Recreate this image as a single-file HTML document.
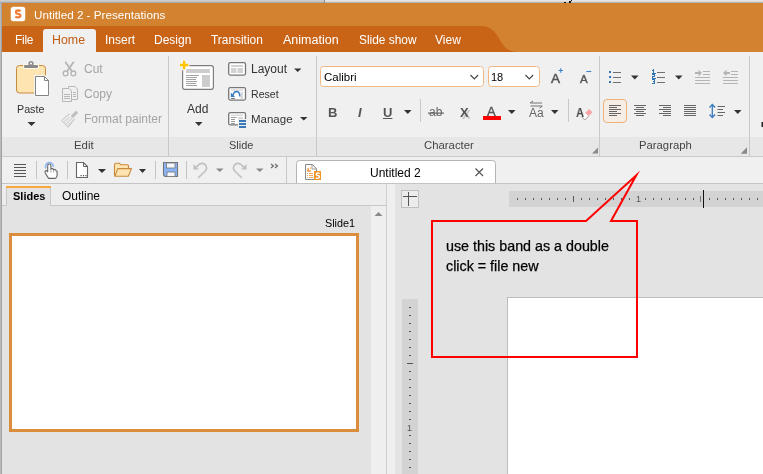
<!DOCTYPE html>
<html><head><meta charset="utf-8">
<style>
*{box-sizing:border-box;margin:0;padding:0}
html,body{width:763px;height:474px;overflow:hidden;background:#e3e3e3;font-family:"Liberation Sans",sans-serif;font-size:12px;color:#222}
.a{position:absolute}
.t{position:absolute;white-space:pre;line-height:1;will-change:transform}
svg{position:absolute;left:0;top:0}
</style></head><body>
<svg width="763" height="474" viewBox="0 0 763 474" shape-rendering="crispEdges">
<!-- window chrome -->
<rect x="0" y="0" width="324" height="1" fill="#cdcdcd"/><rect x="0" y="1" width="324" height="1" fill="#c4c4c4"/><rect x="0" y="2" width="324" height="1" fill="#a9a9a9"/>
<rect x="325" y="0" width="438" height="1" fill="#e4e4e4"/><rect x="325" y="1" width="438" height="1" fill="#dcdcdc"/><rect x="325" y="2" width="438" height="1" fill="#b4b4b4"/>
<rect x="324" y="0" width="1" height="3" fill="#8f8f8f"/>
<rect x="564" y="2" width="2" height="1" fill="#111"/><rect x="569" y="1" width="2" height="2" fill="#111"/><rect x="571" y="0" width="1" height="1" fill="#111"/>
<rect x="2" y="3" width="761" height="49" fill="#d3822f"/>
<path d="M2 26 H481 C490 26 495 31 500 40 C504 47 508 52 518 52 H2 Z" fill="#c96417" shape-rendering="auto"/>
<rect x="0" y="3" width="1" height="471" fill="#bababa"/><rect x="1" y="3" width="1" height="471" fill="#a2a2a2"/>
<!-- ribbon -->
<rect x="2" y="52" width="761" height="85" fill="#f0f0f0"/>
<rect x="2" y="137" width="761" height="19" fill="#e7e7e7"/>
<rect x="2" y="156" width="761" height="1" fill="#c9c9c9"/>
<rect x="43" y="29" width="53" height="23" rx="3" fill="#f0f0f0" shape-rendering="auto"/>
<rect x="43" y="40" width="53" height="12" fill="#f0f0f0"/>
<rect x="168" y="56" width="1" height="100" fill="#c8c8c8"/>
<rect x="316" y="56" width="1" height="100" fill="#c8c8c8"/>
<rect x="599" y="56" width="1" height="100" fill="#c8c8c8"/>
<rect x="749" y="56" width="1" height="100" fill="#c8c8c8"/>
<!-- toolbar row -->
<rect x="2" y="157" width="761" height="26" fill="#f0f0f0"/>
<rect x="2" y="183" width="761" height="1" fill="#c4c4c4"/>
<rect x="286" y="157" width="1" height="26" fill="#c8c8c8"/>
<!-- doc tab -->
<path d="M296.5 183 V163.5 A3 3 0 0 1 299.5 160.5 H492.5 A3 3 0 0 1 495.5 163.5 V183" fill="#fff" stroke="#b4b4b4" shape-rendering="auto"/>
<!-- left panel -->
<rect x="2" y="184" width="385" height="21" fill="#ededed"/>
<rect x="2" y="205" width="385" height="1" fill="#c8c8c8"/>
<rect x="2" y="206" width="369" height="268" fill="#e3e3e3"/>
<rect x="371" y="206" width="15" height="268" fill="#efefef"/>
<rect x="386" y="184" width="1" height="290" fill="#cfcfcf"/>
<rect x="387" y="184" width="8" height="290" fill="#efefef"/>
<!-- slides tab -->
<rect x="6" y="186" width="45" height="20" fill="#e3e3e3"/>
<rect x="6" y="186" width="1" height="20" fill="#c8c8c8"/>
<rect x="50" y="186" width="1" height="20" fill="#c8c8c8"/>
<rect x="6" y="186" width="45" height="2" fill="#f9a83c"/>
<!-- thumbnail -->
<rect x="10.5" y="234.5" width="347" height="196" fill="#fff" stroke="#da8d3c" stroke-width="3"/>
<!-- scroll up arrow -->
<path d="M374.5 216 L378.5 212 L382.5 216 Z" fill="#8a8a8a" shape-rendering="auto"/>
<!-- edit area -->
<rect x="395" y="184" width="368" height="290" fill="#e3e3e3"/>
<rect x="401.5" y="190.5" width="17" height="17" fill="#ececec" stroke="#c0c0c0"/>
<rect x="403" y="196" width="14" height="1" fill="#555"/>
<rect x="408" y="192" width="1" height="14" fill="#555"/>
<rect x="509" y="191" width="254" height="16" fill="#d3d3d3"/>
<rect x="402" y="299" width="16" height="175" fill="#d3d3d3"/>
<rect x="507" y="297" width="256" height="177" fill="#fff"/>
<rect x="507" y="297" width="256" height="1" fill="#bdbdbd"/>
<rect x="507" y="297" width="1" height="177" fill="#bdbdbd"/>

<!-- ===== EDIT GROUP ===== -->
<g shape-rendering="auto">
<rect x="16.5" y="65.5" width="29" height="27.5" rx="3" fill="#fde4b0" stroke="#c98a3e"/>
<rect x="23" y="64" width="16" height="5" rx="1.5" fill="#fff6e6"/>
<rect x="24" y="65" width="14" height="3" rx="1" fill="#8a8a8a"/>
<circle cx="31" cy="63.6" r="2.6" fill="#8a8a8a"/>
<circle cx="31" cy="63.4" r="1" fill="#fff"/>
<path d="M35.5 76.5 H44.5 L48.5 80.5 V95.5 H35.5 Z" fill="#fff" stroke="#f4f4f4" stroke-width="3"/>
<path d="M35.5 76.5 H44.5 L48.5 80.5 V95.5 H35.5 Z" fill="#fff" stroke="#858585"/>
<path d="M44.5 76.5 V80.5 H48.5" fill="none" stroke="#858585"/>
<path d="M27.5 122 H35.5 L31.5 126 Z" fill="#333"/>
<!-- scissors -->
<g stroke="#b4b4b4" fill="none">
<path d="M65.2 61.8 L71.8 71" stroke-width="1.7"/>
<path d="M73.8 61.8 L67.2 71" stroke-width="1.7"/>
<circle cx="65.6" cy="73.4" r="2.4" stroke-width="1.3"/>
<circle cx="73.4" cy="73.4" r="2.4" stroke-width="1.3"/>
</g>
<!-- copy -->
<g stroke="#b8b8b8" fill="#f0f0f0">
<path d="M68.5 86.5 H75 L77.5 89 V99.5 H68.5 Z"/>
<path d="M62.5 88.5 H69 L71.5 91 V101.5 H62.5 Z"/>
<path d="M73 92.5 H76 M73 94.5 H76 M73 96.5 H76 M64 94.5 H70 M64 96.5 H70 M64 98.5 H70" fill="none"/>
</g>
<!-- brush -->
<g>
<path d="M61.5 120.5 L69 114 L74.5 118.8 L68.3 127.3 Z" fill="#ebebeb" stroke="#bdbdbd" stroke-width="0.9"/>
<path d="M63.8 122.3 L70.5 116.5 M65.8 124.2 L72.3 118.3 M67.6 125.8 L73.4 120.3" stroke="#c9c9c9" stroke-width="0.8"/>
<path d="M69.5 115 L73.8 118.6" stroke="#fff" stroke-width="1.3"/>
<path d="M72.6 116.2 L76.3 112.6" stroke="#c0c0c0" stroke-width="3.2" stroke-linecap="round"/>
</g>
<!-- ===== SLIDE GROUP ===== -->
<rect x="182.6" y="65.6" width="30.8" height="23.8" rx="2.5" fill="#fff" stroke="#7e7e7e" stroke-width="1.2"/>
<rect x="186" y="69" width="24" height="4" fill="#cdcdcd"/>
<rect x="202" y="75" width="8" height="12" fill="#cdcdcd"/>
<path d="M186 75.5 H199 M186 77.5 H197 M186 79.5 H196 M186 81.5 H197 M186 83.5 H196 M186 85.5 H197" stroke="#9a9a9a" stroke-width="0.9"/>
<path d="M182.9 60.8 H185.3 V63.8 H188.3 V66.2 H185.3 V69.2 H182.9 V66.2 H179.9 V63.8 H182.9 Z" fill="#f6f6f6" stroke="#f6f6f6" stroke-width="2.2"/>
<path d="M182.9 60.8 H185.3 V63.8 H188.3 V66.2 H185.3 V69.2 H182.9 V66.2 H179.9 V63.8 H182.9 Z" fill="#ffc400"/>
<path d="M195 122 H202.5 L198.75 126 Z" fill="#333"/>
<!-- layout -->
<rect x="228.7" y="62.7" width="16.8" height="12.4" rx="1.5" fill="#fff" stroke="#777" stroke-width="1.3"/>
<rect x="231" y="65" width="12" height="2" fill="#d2d2d2"/>
<rect x="231" y="68" width="5.5" height="5" fill="#d2d2d2"/>
<rect x="237.5" y="68" width="5.5" height="5" fill="#d2d2d2"/>
<path d="M294 68.5 H301.5 L297.75 72 Z" fill="#333"/>
<!-- reset -->
<rect x="228.7" y="87.7" width="16.8" height="12.4" rx="1.5" fill="#fff" stroke="#777" stroke-width="1.3"/>
<rect x="231" y="89.3" width="12" height="1.5" fill="#d8d8d8"/>
<rect x="240.5" y="92" width="2.5" height="7" fill="#dadada"/>
<rect x="231" y="98" width="4" height="1" fill="#777"/>
<path d="M233 95.5 Q233.5 91.8 236.5 91.6 Q239.8 91.6 239.8 96.5" fill="none" stroke="#3a7bbf" stroke-width="1.5"/>
<path d="M230.8 92.6 V96.9 H235.1 Z" fill="#3a7bbf"/>
<!-- manage -->
<rect x="228.7" y="112.7" width="16.8" height="12.2" rx="1.5" fill="#fff" stroke="#777" stroke-width="1.3"/>
<rect x="231" y="114.5" width="12" height="1.5" fill="#d8d8d8"/>
<rect x="238" y="117" width="5" height="2" fill="#d8d8d8"/>
<path d="M231 117.5 H236.5 M231 119.5 H235 M231 121.5 H235 M231 123.5 H235" stroke="#9a9a9a" stroke-width="1"/>
<rect x="238" y="119" width="9" height="10" fill="#f0f0f0"/>
<rect x="239" y="120" width="7" height="2" fill="#3a78b5"/>
<rect x="239" y="123" width="7" height="2" fill="#3a78b5"/>
<rect x="239" y="126" width="7" height="2" fill="#3a78b5"/>
<path d="M300 117 H307.5 L303.75 120.5 Z" fill="#333"/>
<!-- ===== CHARACTER GROUP ===== -->
<rect x="320.5" y="66.5" width="163" height="20" rx="3" fill="#fff" stroke="#f0b884"/>
<path d="M470.5 75 L474.3 79 L478.1 75" fill="none" stroke="#444" stroke-width="1.1"/>
<rect x="488.5" y="66.5" width="51" height="20" rx="3" fill="#fff" stroke="#f0b884"/>
<path d="M525.5 75 L529.3 79 L533.1 75" fill="none" stroke="#444" stroke-width="1.1"/>
<path d="M558.5 70.5 H563 M560.75 68.3 V72.8" stroke="#3d85c6" stroke-width="1.1"/>
<path d="M586.3 71.5 H591.3" stroke="#3d85c6" stroke-width="1.1"/>
<path d="M404 110 H411.5 L407.75 114 Z" fill="#333"/>
<rect x="420" y="99" width="1" height="23" fill="#c8c8c8"/><rect x="428" y="112.5" width="16" height="1.2" fill="#666"/>
<path d="M508 110 H515.5 L511.75 114 Z" fill="#333"/>
<path d="M551 110 H558.5 L554.75 114 Z" fill="#333"/>
<rect x="568" y="99" width="1" height="23" fill="#c8c8c8"/>
<rect x="483" y="116" width="18" height="4" fill="#ff0000"/>
<!-- aa arrows -->
<path d="M530.5 103 H542 M530.5 106 H542" stroke="#666" stroke-width="0.9"/>
<path d="M530 103 L533 101 M542.5 106 L539.5 108" stroke="#666" stroke-width="0.9"/>
<!-- eraser -->
<path d="M589.2 109 L592.5 112.3 L588.5 116.3 L585.2 113 Z" fill="#f9a3a8"/>
<path d="M585.2 113 L588.5 116.3 L584.8 120 L581.5 116.7 Z" fill="#fbfbfb"/>
<path d="M581.5 116.7 L584.8 120 L588.5 116.3" fill="none" stroke="#9a8080" stroke-width="0.8"/>
<!-- launcher triangles -->
<path d="M598 147.5 V153.5 H592 Z" fill="#8a8a8a"/>
<path d="M747 147.5 V153.5 H741 Z" fill="#8a8a8a"/>
<path d="M747 147.5 V153.5 H741 Z" fill="#8a8a8a"/>
<!-- ===== PARAGRAPH GROUP ===== -->
<g fill="#2f74b5">
<rect x="609" y="71" width="2" height="2"/><rect x="609" y="76" width="2" height="2"/><rect x="609" y="81" width="2" height="2"/>
</g>
<path d="M613 72.5 H621 M613 77.5 H621 M613 82.5 H621" stroke="#707070" stroke-width="1"/>
<path d="M631 75.5 H638.5 L634.75 79.5 Z" fill="#333"/>
<path d="M657 72.5 H665 M657 77.5 H665 M657 82.5 H665" stroke="#707070" stroke-width="1"/>
<path d="M675 75.5 H682.5 L678.75 79.5 Z" fill="#333"/>
<g stroke="#b4b4b4" stroke-width="1" fill="none">
<path d="M703 71.5 H710 M703 74.5 H710 M695 77.5 H710 M695 80.5 H710 M695 83.5 H710"/>
<path d="M695 73 H699" stroke-width="2"/><path d="M698.5 69.8 L702 73 L698.5 76.2 Z" fill="#b4b4b4" stroke="none"/>
<path d="M731 71.5 H738 M731 74.5 H738 M723 77.5 H738 M723 80.5 H738 M723 83.5 H738"/>
<path d="M726 73 H730" stroke-width="2"/><path d="M726.5 69.8 L723 73 L726.5 76.2 Z" fill="#b4b4b4" stroke="none"/>
</g>
<rect x="603.5" y="99.5" width="23" height="23" rx="3.5" fill="#f6ede5" stroke="#efb27a"/>
<g stroke="#666" stroke-width="1">
<path d="M609 105.5 H621 M609 107.5 H617 M609 109.5 H621 M609 111.5 H617 M609 113.5 H621 M609 115.5 H617"/>
<path d="M634 105.5 H646 M636 107.5 H644 M634 109.5 H646 M636 111.5 H644 M634 113.5 H646 M636 115.5 H644"/>
<path d="M659 105.5 H671 M663 107.5 H671 M659 109.5 H671 M663 111.5 H671 M659 113.5 H671 M663 115.5 H671"/>
<path d="M684 105.5 H696 M684 107.5 H696 M684 109.5 H696 M684 111.5 H696 M684 113.5 H696 M684 115.5 H696"/>
<path d="M717.5 106.5 H725 M717.5 109.5 H723 M717.5 112.5 H725 M717.5 115.5 H723"/>
</g>
<path d="M712.3 105 V117" stroke="#3a7bbf" stroke-width="1.3"/>
<path d="M709.5 107.5 L712.3 104.5 L715.1 107.5 M709.5 114.5 L712.3 117.5 L715.1 114.5" fill="none" stroke="#3a7bbf" stroke-width="1.3"/>
<path d="M734 110 H741.5 L737.75 114 Z" fill="#333"/>
<rect x="762" y="122" width="1" height="5" fill="#222"/><rect x="761" y="122" width="1" height="5" fill="#888"/>
</g>

<!-- ===== TOOLBAR ROW ===== -->
<g shape-rendering="auto">
<path d="M14 164.5 H26 M14 167.5 H26 M14 170.5 H26 M14 173.5 H26 M14 176.5 H26" stroke="#555" stroke-width="1"/>
<rect x="36" y="161" width="1" height="18" fill="#c4c4c4"/>
<path d="M46 168.3 A3.9 3.9 0 1 1 53.3 166.8" fill="none" stroke="#84adf2" stroke-width="1.6" opacity="0.9"/>
<path d="M48.6 178.4 L45.4 173.2 Q44.5 171.2 45.7 170.7 Q46.8 170.3 47.7 171.8 V165.6 Q47.7 164 49.3 164 Q50.9 164 50.9 165.6 V169.2 Q51.4 168.4 52.5 168.6 Q53.5 168.8 53.6 169.9 Q54.3 169.2 55.2 169.6 Q56.1 170 56.1 171 Q56.7 170.8 57.1 171.4 V175.5 Q57 177.3 55.4 178.4 Z" fill="#fff" stroke="#666" stroke-width="1.1" stroke-linejoin="round"/>
<path d="M50.9 169.3 V172.5 M53.6 170 V172.5" stroke="#888" stroke-width="0.7"/>
<rect x="67" y="161" width="1" height="18" fill="#c4c4c4"/>
<path d="M76.5 162.5 H83.5 L87.5 166.5 V177.5 H76.5 Z" fill="#fff" stroke="#666" stroke-width="1.1"/>
<path d="M83.5 162.5 V166.5 H87.5" fill="none" stroke="#666" stroke-width="1"/>
<rect x="80.5" y="175" width="1.2" height="1.2" fill="#555"/><rect x="82.9" y="175" width="1.2" height="1.2" fill="#555"/><rect x="85.3" y="175" width="1.2" height="1.2" fill="#555"/>
<path d="M98 169 H106 L102 173 Z" fill="#333"/>
<path d="M114.5 175.8 V165 Q114.5 163.3 116 163.3 H119.5 L121 164.8 H127.5 Q128.5 164.8 128.5 166 V168.5" fill="#fde4b0" stroke="#c98a3e" stroke-width="1.1"/>
<path d="M114.8 176.2 L117.8 168.6 H131.5 L128.3 176.2 Z" fill="#fde4b0" stroke="#c98a3e" stroke-width="1.1" stroke-linejoin="round"/>
<path d="M139 169 H146 L142.5 173 Z" fill="#333"/>
<rect x="155" y="161" width="1" height="18" fill="#c4c4c4"/>
<path d="M163.5 162.5 H177.5 V176.5 H165 L163.5 175 Z" fill="#8ab4f8" stroke="#757575" stroke-width="1.1"/>
<rect x="166.5" y="163" width="8.5" height="5" fill="#f4f7fc" stroke="#757575" stroke-width="0.8"/>
<rect x="167" y="172" width="8" height="4.5" fill="#f4f7fc" stroke="#757575" stroke-width="0.8"/>
<rect x="186" y="161" width="1" height="18" fill="#c4c4c4"/>
<path d="M193.5 164 V169.5 H199 Z" fill="#bfbfbf"/>
<path d="M196.5 167 Q201 161.5 205 164.5 Q207.8 167.5 205.5 170.8 L198.2 177.8" fill="none" stroke="#c2c2c2" stroke-width="1.7"/>
<path d="M216 168.5 H223.5 L219.75 172 Z" fill="#8a8a8a"/>
<path d="M246.5 164 V169.5 H241 Z" fill="#bfbfbf"/>
<path d="M243.5 167 Q239 161.5 235 164.5 Q232.2 167.5 234.5 170.8 L241.8 177.8" fill="none" stroke="#c2c2c2" stroke-width="1.7"/>
<path d="M256 168.5 H263.5 L259.75 172 Z" fill="#8a8a8a"/>
<path d="M271 164 L273.5 166 L271 168 M275 164 L277.5 166 L275 168" fill="none" stroke="#666" stroke-width="1.1"/>
<!-- doc tab icon -->
<path d="M305.5 164.5 H312.5 L316.5 169 V179.5 H305.5 Z" fill="#fff" stroke="#888" stroke-width="1"/>
<path d="M312 164.5 V169 H316.5" fill="none" stroke="#888" stroke-width="0.8"/>
<path d="M309 170 V167.8 A2.2 2.2 0 1 0 311.2 170 Z" fill="#f3a860"/><path d="M310 169 V167 A2 2 0 0 1 312 169 Z" fill="#f7bf8c"/>
<path d="M307 173.5 H308 M307 175.5 H308 M307 177.5 H308 M309 173.5 H313 M309 175.5 H313 M309 177.5 H313" stroke="#f3a860" stroke-width="1"/>
<rect x="314" y="171" width="7" height="9" fill="#f0932b"/>
<path d="M319.6 173.6 Q319 172.9 317.8 172.9 Q316.2 173 316.3 174.3 Q316.5 175.3 317.9 175.5 Q319.6 175.8 319.6 177.2 Q319.4 178.4 317.8 178.4 Q316.5 178.4 315.9 177.7" fill="none" stroke="#fff" stroke-width="1.4"/>
<path d="M475.5 168.5 L483 176 M483 168.5 L475.5 176" stroke="#555" stroke-width="1.2"/>
<!-- app icon -->
<rect x="10.5" y="6.5" width="15" height="15" rx="3" fill="#fde6cf" opacity="0.6"/>
<rect x="11" y="7" width="14" height="14" rx="2.5" fill="#fff"/>
<path d="M20.6 11.2 Q19.6 10.4 18.1 10.4 Q15.8 10.5 15.9 12.3 Q16.1 13.6 18.1 13.9 Q20.5 14.3 20.4 15.9 Q20.2 17.4 17.9 17.4 Q16.3 17.4 15.4 16.5" fill="none" stroke="#f27b35" stroke-width="2.2"/>
<!-- numbered list digits -->
<g fill="none" stroke="#2f74b5" stroke-width="1" shape-rendering="crispEdges">
<path d="M653.5 69 V73.5 M652 73.5 H655.5 M652 70.5 H653"/>
<path d="M652 74.5 H654.5 V76.5 H652.5 V78.5 H655.5"/>
<path d="M652 79.5 H654.5 V83.5 H652 M653 81.5 H654.5"/>
</g>
</g>
<g id="hr" fill="#555"><rect x="517" y="198" width="1" height="2"/><rect x="525" y="198" width="1" height="2"/><rect x="533" y="198" width="1" height="2"/><rect x="541" y="198" width="1" height="2"/><rect x="549" y="198" width="1" height="2"/><rect x="557" y="198" width="1" height="2"/><rect x="565" y="198" width="1" height="2"/><rect x="573" y="196" width="1" height="6"/><rect x="581" y="198" width="1" height="2"/><rect x="589" y="198" width="1" height="2"/><rect x="597" y="198" width="1" height="2"/><rect x="605" y="198" width="1" height="2"/><rect x="613" y="198" width="1" height="2"/><rect x="621" y="198" width="1" height="2"/><rect x="629" y="198" width="1" height="2"/><rect x="645" y="198" width="1" height="2"/><rect x="653" y="198" width="1" height="2"/><rect x="661" y="198" width="1" height="2"/><rect x="669" y="198" width="1" height="2"/><rect x="677" y="198" width="1" height="2"/><rect x="685" y="198" width="1" height="2"/><rect x="693" y="198" width="1" height="2"/><rect x="700" y="196" width="1" height="6" fill="#777"/><rect x="709" y="198" width="1" height="2"/><rect x="717" y="198" width="1" height="2"/><rect x="725" y="198" width="1" height="2"/><rect x="733" y="198" width="1" height="2"/><rect x="741" y="198" width="1" height="2"/><rect x="749" y="198" width="1" height="2"/><rect x="757" y="198" width="1" height="2"/><rect x="703" y="190" width="1" height="18" fill="#111"/></g>
<g id="vr" fill="#555"><rect x="409" y="307" width="2" height="1"/><rect x="409" y="315" width="2" height="1"/><rect x="409" y="323" width="2" height="1"/><rect x="409" y="331" width="2" height="1"/><rect x="409" y="339" width="2" height="1"/><rect x="409" y="347" width="2" height="1"/><rect x="409" y="355" width="2" height="1"/><rect x="407" y="363" width="6" height="1"/><rect x="409" y="371" width="2" height="1"/><rect x="409" y="379" width="2" height="1"/><rect x="409" y="387" width="2" height="1"/><rect x="409" y="395" width="2" height="1"/><rect x="409" y="403" width="2" height="1"/><rect x="409" y="411" width="2" height="1"/><rect x="409" y="419" width="2" height="1"/><rect x="409" y="435" width="2" height="1"/><rect x="409" y="443" width="2" height="1"/><rect x="409" y="451" width="2" height="1"/><rect x="409" y="459" width="2" height="1"/><rect x="409" y="467" width="2" height="1"/></g>
</svg>

<div class="t" style="left:34px;top:9px;font-size:11.7px;color:#fff">Untitled 2 - Presentations</div>
<div class="t" style="left:14.6px;top:33.6px;color:#fff;font-size:12px;letter-spacing:-0.3px">File</div>
<div class="t" style="left:52.2px;top:33.5px;color:#c05c14;font-size:12.4px">Home</div>
<div class="t" style="left:104.8px;top:33.6px;color:#fff;font-size:12px">Insert</div>
<div class="t" style="left:154.4px;top:33.6px;color:#fff;font-size:12px">Design</div>
<div class="t" style="left:211px;top:34.5px;color:#fff;font-size:11.9px">Transition</div>
<div class="t" style="left:283px;top:33.8px;color:#fff;font-size:12.5px">Animation</div>
<div class="t" style="left:359px;top:34.5px;color:#fff;font-size:11.9px">Slide show</div>
<div class="t" style="left:434.6px;top:33.6px;color:#fff;font-size:12px">View</div>

<div class="t" style="left:73.6px;top:140.4px;color:#444;font-size:11.4px">Edit</div>
<div class="t" style="left:228.8px;top:140.4px;color:#444;font-size:11px">Slide</div>
<div class="t" style="left:424px;top:140.4px;color:#444;font-size:11.35px">Character</div>
<div class="t" style="left:638.8px;top:140.4px;color:#444;font-size:11.3px">Paragraph</div>


<div class="t" style="left:16.8px;top:103.9px;color:#333;font-size:10.7px">Paste</div>
<div class="t gray" style="left:84px;top:62.5px;color:#a4a4a4">Cut</div>
<div class="t gray" style="left:84px;top:87.8px;color:#a4a4a4">Copy</div>
<div class="t gray" style="left:84px;top:113.4px;color:#a4a4a4">Format painter</div>
<div class="t" style="left:187px;top:102.7px;color:#333">Add</div>
<div class="t" style="left:251px;top:62.8px;color:#333">Layout</div>
<div class="t" style="left:250.8px;top:89.2px;color:#333;font-size:10.6px">Reset</div>
<div class="t" style="left:251px;top:113.9px;color:#333;font-size:11.5px">Manage</div>
<div class="t" style="left:323.6px;top:72px;color:#000;font-size:11.5px">Calibri</div>
<div class="t" style="left:491px;top:72.2px;color:#000;font-size:11px">18</div>
<div class="t" style="left:551px;top:72px;color:#555;font-size:13.5px;-webkit-text-stroke:0.5px #555">A</div>
<div class="t" style="left:580.3px;top:74px;color:#555;font-size:11.5px;-webkit-text-stroke:0.4px #555">A</div>
<div class="t" style="left:328px;top:105.5px;color:#555;font-size:13px;font-weight:bold">B</div>
<div class="t" style="left:357.5px;top:105.5px;color:#555;font-size:13px;font-weight:bold;font-style:italic">I</div>
<div class="t" style="left:383px;top:105.5px;color:#555;font-size:13px;font-weight:bold;text-decoration:underline">U</div>
<div class="t" style="left:429px;top:105.5px;color:#666;font-size:12px;">ab</div>
<div class="t" style="left:461.5px;top:107.5px;color:#c4c4c4;font-size:13px;font-weight:bold">X</div><div class="t" style="left:459.5px;top:105.5px;color:#555;font-size:13px;font-weight:bold">X</div>
<div class="t" style="left:487.3px;top:104.8px;color:#555;font-size:13px;-webkit-text-stroke:0.4px #555">A</div>
<div class="t" style="left:529px;top:106.5px;color:#666;font-size:12px">Aa</div>
<div class="t" style="left:576px;top:105.8px;color:#444;font-size:13px;font-weight:bold;transform:scaleX(0.85);transform-origin:0 0">A</div>
<div class="t" style="left:446px;top:238.5px;color:#000;font-size:14.3px;-webkit-text-stroke:0.25px #000">use this band as a double</div>
<div class="t" style="left:446px;top:258.5px;color:#000;font-size:14.3px;-webkit-text-stroke:0.25px #000">click = file new</div>
<div class="t" style="left:635.5px;top:194.5px;color:#555;font-size:9px">1</div>
<div class="t" style="left:407px;top:423.5px;color:#555;font-size:9px">1</div>
<div class="t" style="left:370px;top:167px;color:#000">Untitled 2</div>
<div class="t" style="left:12.5px;top:190.5px;color:#000;font-weight:bold;font-size:11px">Slides</div>
<div class="t" style="left:62px;top:190px;color:#000">Outline</div>
<div class="t" style="left:324.8px;top:217.6px;color:#000;font-size:10.8px">Slide1</div>

<svg width="763" height="474" viewBox="0 0 763 474" style="position:absolute;left:0;top:0">
<path d="M432 221 H586 L636.3 175.3 L611 221 H637 V357 H432 Z" fill="none" stroke="#ff0000" stroke-width="2" stroke-linejoin="miter" stroke-miterlimit="20"/>
</svg>
</body></html>
